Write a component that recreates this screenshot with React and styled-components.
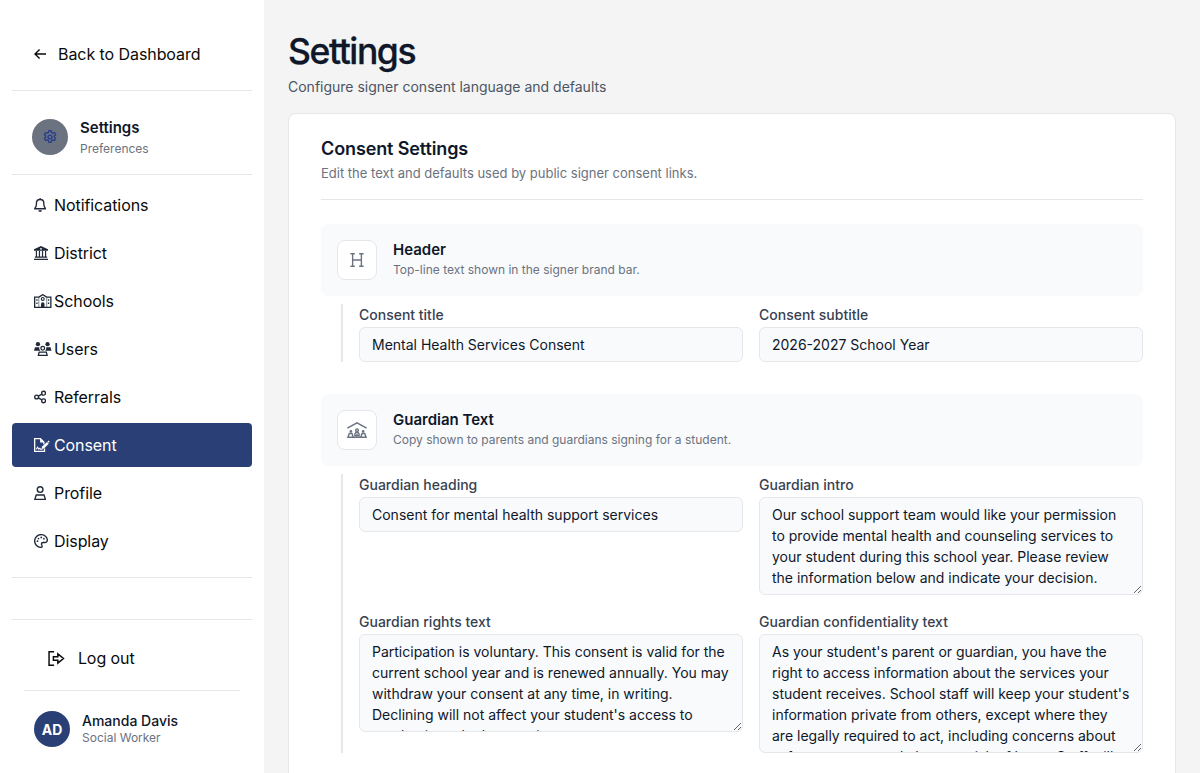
import React from 'react';
import styled, { createGlobalStyle } from 'styled-components';

const GlobalStyle = createGlobalStyle`
    * {
        box-sizing: border-box;
    }

    body {
        margin: 0;
        background: #f4f4f4;
        font-family: Inter, sans-serif;
        color: #0f172a;
        overflow: hidden;
    }
`;

const Page = styled.div`
    display: flex;
    height: 773px;
    overflow: hidden;
`;

const Sidebar = styled.aside`
    width: 264px;
    flex-shrink: 0;
    padding: 0 12px;
    background: #fff;
    display: flex;
    flex-direction: column;
`;

const BackLink = styled.a`
    display: flex;
    align-items: center;
    gap: 4px;
    height: 91px;
    padding: 18px 22px 0;
    border-bottom: 1px solid #e5e7eb;
    font-size: 16px;
    letter-spacing: -0.07px;
    color: #0a0a0a;
`;

const SidebarTitle = styled.div`
    display: flex;
    align-items: center;
    gap: 12px;
    height: 84px;
    padding: 9px 20px 0;
    border-bottom: 1px solid #e5e7eb;
`;

const Avatar = styled.div`
    display: flex;
    align-items: center;
    justify-content: center;
    width: 36px;
    height: 36px;
    border-radius: 50%;
    background: ${({ $muted }) => ($muted ? '#6b7280' : '#2a3f76')};
    color: ${({ $muted }) => ($muted ? '#2a3f8a' : '#fff')};
    font-size: 14px;
    font-weight: 700;
`;

const Name = styled.div`
    font-size: ${({ $size }) => $size}px;
    line-height: 20px;
    font-weight: ${({ $weight }) => $weight};
    color: #0f172a;
`;

const Caption = styled.div`
    font-size: 12px;
    line-height: ${({ $line }) => $line}px;
    color: #6b7280;
`;

const TitleText = styled.div`
    padding-top: 3px;
`;

const UserText = styled.div`
    padding-bottom: 2px;
`;

const Nav = styled.nav`
    display: flex;
    flex-direction: column;
    gap: 4px;
    height: 403px;
    padding-top: 8px;
    border-bottom: 1px solid #e5e7eb;
`;

const NavItem = styled.a`
    display: flex;
    align-items: center;
    height: 44px;
    flex-shrink: 0;
    padding: 0 22px;
    border-radius: 4px;
    font-size: 16px;
    letter-spacing: -0.08px;
    background: ${({ $active }) => ($active ? '#2a3f76' : 'transparent')};
    color: ${({ $active }) => ($active ? '#fff' : '#0a0a0a')};

    svg {
        color: ${({ $active }) => ($active ? '#fff' : '#1f2937')};
    }
`;

const IconBox = styled.span`
    display: flex;
    align-items: center;
    width: 20px;
    height: 20px;
`;

const Footer = styled.div`
    margin-top: 41px;
    padding: 0 12px;
    border-top: 1px solid #e5e7eb;
`;

const LogOut = styled.a`
    display: flex;
    align-items: center;
    gap: 13px;
    height: 71px;
    padding: 6px 24px 0;
    border-bottom: 1px solid #e5e7eb;
    font-size: 16px;
    letter-spacing: -0.07px;
    color: #0a0a0a;
`;

const User = styled.div`
    display: flex;
    align-items: center;
    gap: 12px;
    padding: 20px 10px;
`;

const Main = styled.main`
    flex: 1;
    padding: 32px 24px 0;
`;

const PageTitle = styled.h1`
    margin: 0;
    font-size: 35.5px;
    line-height: 40px;
    font-weight: 500;
    letter-spacing: -1.4px;
    color: #0f172a;
    -webkit-text-stroke: 0.3px #0f172a;
`;

const PageLead = styled.p`
    margin: 5px 0 16px;
    font-size: 14px;
    line-height: 20px;
    color: #4b5563;
`;

const Card = styled.section`
    height: 1100px;
    padding: 24px 32px;
    background: #fff;
    border: 1px solid #e5e7eb;
    border-radius: 8px;
`;

const CardHead = styled.header`
    height: 62px;
    margin-bottom: 24px;
    border-bottom: 1px solid #e5e7eb;
`;

const CardTitle = styled.h2`
    margin: 0;
    font-size: 18px;
    line-height: 22px;
    font-weight: 600;
    letter-spacing: -0.12px;
`;

const CardText = styled.p`
    margin: 3px 0 0;
    font-size: 13px;
    line-height: 20px;
    color: #6b7280;
`;

const Section = styled.div`
    margin-bottom: 32px;
`;

const SectionHead = styled.div`
    display: flex;
    align-items: center;
    gap: 16px;
    height: 72px;
    padding: 0 16px;
    border-radius: 8px;
    background: #f8fafc;
`;

const SectionIcon = styled.div`
    display: flex;
    align-items: center;
    justify-content: center;
    width: 40px;
    height: 40px;
    border: 1px solid #e5e7eb;
    border-radius: 8px;
    background: #fff;
    color: #6b7280;
`;

const Fields = styled.div`
    display: grid;
    grid-template-columns: 1fr 1fr;
    align-items: start;
    gap: 16px;
    margin: 8px 0 0 20px;
    padding-left: 16px;
    border-left: 2px solid #e5e7eb;
`;

const Label = styled.label`
    display: flex;
    flex-direction: column;
    gap: 2px;
    font-size: 14px;
    line-height: 21px;
    font-weight: 500;
    color: #374151;
`;

const Input = styled.input`
    width: 100%;
    height: 35px;
    padding: 6px 12px;
    border: 1px solid #e5e7eb;
    border-radius: 6px;
    background: #f8fafc;
    font: 400 14px/21px Inter, sans-serif;
    color: #0f172a;
`;

const TextArea = styled.textarea`
    display: block;
    width: 100%;
    height: ${({ $height }) => $height}px;
    padding: 6px 12px;
    border: 1px solid #e5e7eb;
    border-radius: 6px;
    background: #f8fafc;
    font: 400 14px/21px Inter, sans-serif;
    color: #0f172a;
    overflow: hidden;
    resize: vertical;
`;

// Icons share a 512 unit height, the width follows the drawing
const Icon = ({ w = 448, size = 14, children }) => (
    <svg
        width={(w / 512) * size}
        height={size}
        viewBox={`0 0 ${w} 512`}
        fill="none"
        stroke="currentColor"
        strokeWidth="50"
    >
        {children}
    </svg>
);

const ArrowIcon = () => (
    <Icon>
        <path d="M440 256H36M204 88 36 256l168 168" />
    </Icon>
);

const GearIcon = () => (
    <Icon w={512}>
        <path
            strokeLinejoin="round"
            d="M213 26h86l14 66 42 25 65-21 43 74-51 46v48l51 46-43 74-65-21-42 25-14 66h-86l-14-66-42-25-65 21-43-74 51-46v-48l-51-46 43-74 65 21 42-25z"
        />
        <circle cx="256" cy="256" r="70" />
    </Icon>
);

const BellIcon = () => (
    <Icon>
        <path d="M224 0v60M224 56c-78 0-136 60-136 136v48c0 54-22 94-58 138v14h388v-14c-36-44-58-84-58-138v-48c0-76-58-136-136-136z" />
        <path d="M160 448h128c0 38-28 64-64 64s-64-26-64-64z" fill="currentColor" stroke="none" />
    </Icon>
);

const BankIcon = () => (
    <Icon w={512}>
        <path
            fillRule="evenodd"
            fill="currentColor"
            stroke="none"
            d="M0 170v-50L256 0l256 120v50zM256 70a34 34 0 1 0 0 68 34 34 0 0 0 0-68z"
        />
        <path d="M88 176v216M200 176v216M312 176v216M424 176v216M32 408h448M0 486h512" strokeWidth="44" />
    </Icon>
);

const SchoolIcon = () => (
    <Icon w={640}>
        <path d="M24 488V112h152L320 26l144 86h152v376z" strokeWidth="48" />
        <path d="M176 112v376M464 112v376" strokeWidth="20" />
        <circle cx="320" cy="180" r="52" strokeWidth="42" />
        <path d="M256 488V368a64 64 0 0 1 128 0v120z" fill="currentColor" stroke="none" />
        <path d="M108 190v60M108 310v60M532 190v60M532 310v60" strokeWidth="48" />
    </Icon>
);

const UsersIcon = () => (
    <Icon w={640}>
        <g fill="currentColor" stroke="none">
            <circle cx="144" cy="80" r="78" />
            <circle cx="496" cy="80" r="78" />
            <path d="M0 320 36 192h160l-6 52 40 76zM640 320l-36-128H444l6 52-40 76z" />
        </g>
        <circle cx="320" cy="232" r="68" strokeWidth="46" />
        <path d="m188 368-28 120h320l-28-120z" strokeWidth="48" />
    </Icon>
);

const ShareIcon = () => (
    <Icon>
        <circle cx="96" cy="256" r="70" />
        <circle cx="350" cy="116" r="70" />
        <circle cx="350" cy="396" r="70" />
        <path d="m158 222 130-72M158 290l130 72" />
    </Icon>
);

const ConsentIcon = () => (
    <Icon w={576}>
        <path d="M384 384v104H24V24h210l126 126v74" strokeWidth="48" />
        <path d="M224 8v152h152z" fill="currentColor" stroke="none" />
        <path d="m80 414 50-76 44 68 40-34 24 36h70" strokeWidth="38" />
        <path d="m276 406 22-92 176-172 66 66-174 176z" fill="currentColor" stroke="none" />
        <path d="m494 124 34-34 46 46-34 34z" fill="currentColor" stroke="none" />
    </Icon>
);

const ProfileIcon = () => (
    <Icon>
        <circle cx="224" cy="130" r="104" />
        <path d="M82 328h284l52 160H30z" />
    </Icon>
);

const PaletteIcon = () => (
    <Icon w={512}>
        <path d="M256 488C128 488 24 384 24 256S128 24 256 24s232 92 232 206c0 48-34 82-80 82h-78c-34 0-58 24-58 54 0 42 38 56 24 92-6 20-20 30-40 30z" />
        <g fill="currentColor" stroke="none">
            <circle cx="128" cy="264" r="32" />
            <circle cx="164" cy="166" r="32" />
            <circle cx="264" cy="124" r="32" />
            <circle cx="362" cy="172" r="32" />
        </g>
    </Icon>
);

const LogOutIcon = () => (
    <Icon w={576} size={15}>
        <path d="M208 24H36v464h172M184 196h152V96l192 160-192 160V316H184z" strokeWidth="50" />
    </Icon>
);

const HeadingIcon = () => (
    <Icon w={512} size={14}>
        <path d="M16 28h160M336 28h160M16 484h160M336 484h160M96 28v456M416 28v456M96 256h320" strokeWidth="50" />
    </Icon>
);

const GuardianIcon = () => (
    <Icon w={640} size={16}>
        <path d="M12 196 320 28l308 168" strokeWidth="50" />
        <g strokeWidth="46">
            <circle cx="320" cy="262" r="42" />
            <path d="M254 440v-60l30-44h72l30 44v60z" />
            <path d="m30 488 44-120h86l40 120zM610 488l-44-120h-86l-40 120z" />
            <path d="M200 488h240M320 372v68" />
        </g>
        <g fill="currentColor" stroke="none">
            <circle cx="124" cy="300" r="42" />
            <circle cx="516" cy="300" r="42" />
        </g>
    </Icon>
);

const navItems = [
    { label: 'Notifications', icon: <BellIcon /> },
    { label: 'District', icon: <BankIcon /> },
    { label: 'Schools', icon: <SchoolIcon /> },
    { label: 'Users', icon: <UsersIcon /> },
    { label: 'Referrals', icon: <ShareIcon /> },
    { label: 'Consent', icon: <ConsentIcon />, active: true },
    { label: 'Profile', icon: <ProfileIcon /> },
    { label: 'Display', icon: <PaletteIcon /> },
];

const sections = [
    {
        title: 'Header',
        text: 'Top-line text shown in the signer brand bar.',
        icon: <HeadingIcon />,
        fields: [
            { label: 'Consent title', value: 'Mental Health Services Consent' },
            { label: 'Consent subtitle', value: '2026-2027 School Year' },
        ],
    },
    {
        title: 'Guardian Text',
        text: 'Copy shown to parents and guardians signing for a student.',
        icon: <GuardianIcon />,
        fields: [
            { label: 'Guardian heading', value: 'Consent for mental health support services' },
            {
                label: 'Guardian intro',
                height: 98,
                value: 'Our school support team would like your permission to provide mental health and counseling services to your student during this school year. Please review the information below and indicate your decision.',
            },
            {
                label: 'Guardian rights text',
                height: 98,
                value: "Participation is voluntary. This consent is valid for the current school year and is renewed annually. You may withdraw your consent at any time, in writing. Declining will not affect your student's access to academic and other services.",
            },
            {
                label: 'Guardian confidentiality text',
                height: 119,
                value: "As your student's parent or guardian, you have the right to access information about the services your student receives. School staff will keep your student's information private from others, except where they are legally required to act, including concerns about safety or suspected abuse or risk of harm. Staff will",
            },
        ],
    },
];

const App = () => {
    return (
        <Page>
            <GlobalStyle />
            <Sidebar>
                <BackLink>
                    <IconBox><ArrowIcon /></IconBox>
                    Back to Dashboard
                </BackLink>
                <SidebarTitle>
                    <Avatar $muted><GearIcon /></Avatar>
                    <TitleText>
                        <Name $size={15} $weight={600}>Settings</Name>
                        <Caption $line={21}>Preferences</Caption>
                    </TitleText>
                </SidebarTitle>
                <Nav>
                    {navItems.map((item) => (
                        <NavItem key={item.label} $active={item.active}>
                            <IconBox>{item.icon}</IconBox>
                            {item.label}
                        </NavItem>
                    ))}
                </Nav>
                <Footer>
                    <LogOut>
                        <LogOutIcon />
                        Log out
                    </LogOut>
                    <User>
                        <Avatar>AD</Avatar>
                        <UserText>
                            <Name $size={14} $weight={500}>Amanda Davis</Name>
                            <Caption $line={14}>Social Worker</Caption>
                        </UserText>
                    </User>
                </Footer>
            </Sidebar>
            <Main>
                <PageTitle>Settings</PageTitle>
                <PageLead>Configure signer consent language and defaults</PageLead>
                <Card>
                    <CardHead>
                        <CardTitle>Consent Settings</CardTitle>
                        <CardText>Edit the text and defaults used by public signer consent links.</CardText>
                    </CardHead>
                    {sections.map((section) => (
                        <Section key={section.title}>
                            <SectionHead>
                                <SectionIcon>{section.icon}</SectionIcon>
                                <div>
                                    <Name $size={15} $weight={600}>{section.title}</Name>
                                    <Caption $line={20}>{section.text}</Caption>
                                </div>
                            </SectionHead>
                            <Fields>
                                {section.fields.map((field) => (
                                    <Label key={field.label}>
                                        {field.label}
                                        {field.height ? (
                                            <TextArea $height={field.height} defaultValue={field.value} />
                                        ) : (
                                            <Input defaultValue={field.value} />
                                        )}
                                    </Label>
                                ))}
                            </Fields>
                        </Section>
                    ))}
                </Card>
            </Main>
        </Page>
    );
};

export default App;
